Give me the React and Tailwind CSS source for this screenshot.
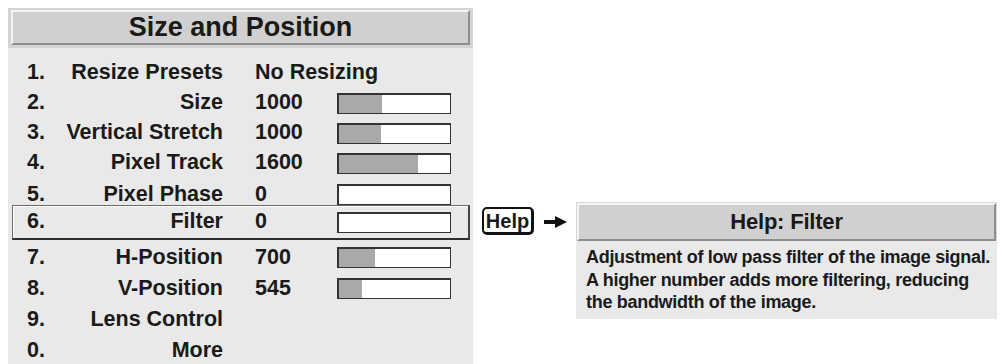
import React from 'react'

const FONT = { fontFamily: '"Liberation Sans", Arial, Helvetica, sans-serif' }

const rows = [
  { n: '1.', label: 'Resize Presets', value: 'No Resizing', h: 'h-[30px]' },
  { n: '2.', label: 'Size', value: '1000', fill: 39, h: 'h-[30px]' },
  { n: '3.', label: 'Vertical Stretch', value: '1000', fill: 38, h: 'h-[30px]' },
  { n: '4.', label: 'Pixel Track', value: '1600', fill: 71, h: 'h-[30px]' },
  { n: '5.', label: 'Pixel Phase', value: '0', fill: 0, h: 'h-[27px] pt-[6px]' },
  { n: '6.', label: 'Filter', value: '0', fill: 0, h: 'h-[35px]', selected: true },
  { n: '7.', label: 'H-Position', value: '700', fill: 32, h: 'mt-[2px] h-[31px]' },
  { n: '8.', label: 'V-Position', value: '545', fill: 21, h: 'h-[31px]' },
  { n: '9.', label: 'Lens Control', h: 'h-[31px]' },
  { n: '0.', label: 'More', h: 'h-[31px]' },
]

function Bar({ fill }) {
  return (
    <div className="h-[21px] w-[114px] border-t-2 border-l-2 border-r border-b border-[#333] bg-white">
      <div className="h-full bg-[#a9a9ab]" style={{ width: `${fill}%` }} />
    </div>
  )
}

function MenuRow({ r }) {
  const frame = r.selected
    ? 'border-t border-l border-[#6a6a6a] border-r-2 border-b-2 border-r-[#444] border-b-[#2e2e2e] shadow-[inset_1px_1px_0_#fff]'
    : 'border border-transparent'
  return (
    <div className={`ml-[4px] mr-[3px] flex items-center pl-[14px] ${frame} ${r.h}`}>
      <span className="w-[33px] shrink-0">{r.n}</span>
      <span className="w-[163px] shrink-0 text-right whitespace-nowrap">{r.label}</span>
      {r.value !== undefined && (
        <span className="ml-[32px] w-[82px] shrink-0 whitespace-nowrap">{r.value}</span>
      )}
      {r.fill !== undefined && <Bar fill={r.fill} />}
    </div>
  )
}

function TitleBar({ children, className }) {
  return (
    <div
      className={`flex items-center justify-center border-t-2 border-l-2 border-t-[#f4f4f4] border-l-[#f4f4f4] border-r-2 border-b-2 border-r-[#8e8e8e] border-b-[#8e8e8e] bg-[#cfd0cf] ${className}`}
    >
      {children}
    </div>
  )
}

function HelpKey() {
  return (
    <div className="ml-[9px] mt-[207px] flex h-[28px] w-[52px] items-center justify-center rounded-[5px] border-2 border-r-[3px] border-b-[3px] border-[#111] bg-white text-[20px] leading-none">
      Help
    </div>
  )
}

function Arrow() {
  return (
    <svg className="ml-[10px] mt-[216px]" width="23" height="12" viewBox="0 0 23 12">
      <rect x="0" y="4" width="13" height="4" fill="#111" />
      <polygon points="11,0 23,6 11,12" fill="#111" />
    </svg>
  )
}

export default function App() {
  return (
    <div
      className="relative flex h-[364px] w-[1003px] items-start overflow-hidden bg-white font-bold text-[#1a1a1a]"
      style={FONT}
    >
      <div className="ml-[8px] mt-[8px] h-[400px] w-[465px] shrink-0 bg-[#e8e9e8]">
        <div className="bg-[#d4d4d4] px-[3px] pt-[2px] pb-[3px]">
          <TitleBar className="h-[35px] text-[27px] leading-none">Size and Position</TitleBar>
        </div>
        <div className="pt-[10px] text-[21.5px] leading-none">
          {rows.map((r) => (
            <MenuRow key={r.n} r={r} />
          ))}
        </div>
      </div>

      <HelpKey />
      <Arrow />

      <div className="ml-[9px] mt-[202px] w-[421px] shrink-0 bg-[#e8e9e8]">
        <div className="bg-[#d8d8d8] px-[1px] pt-[1px]">
          <TitleBar className="h-[38px] text-[22px] leading-none tracking-[-0.2px]">Help: Filter</TitleBar>
        </div>
        <p className="whitespace-nowrap pl-[10px] pt-[5px] pb-[5px] text-[18px] leading-[22.5px] tracking-[-0.3px]">
          Adjustment of low pass filter of the image signal.
          <br />
          A higher number adds more filtering, reducing
          <br />
          the bandwidth of the image.
        </p>
      </div>
    </div>
  )
}
